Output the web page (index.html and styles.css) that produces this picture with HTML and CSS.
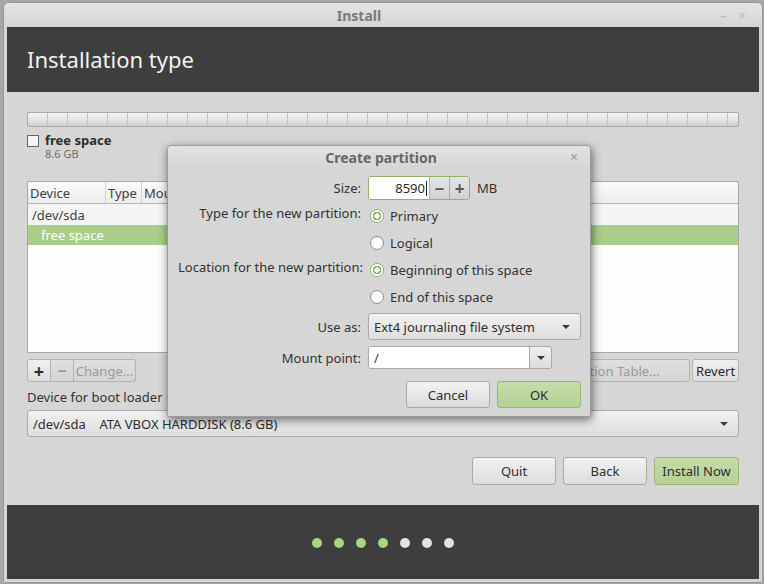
FILE: index.html
```html
<!DOCTYPE html>
<html>
<head>
<meta charset="utf-8">
<link rel="stylesheet" href="styles.css">
</head>
<body>
<div class="window">
  <div class="titlebar">
    <span class="wtitle">Install</span>
    <span class="wbtns"><span class="wmin">–</span><span class="wclose">×</span></span>
  </div>
  <div class="header">Installation type</div>
  <div class="content">
    <div class="pbar"></div>
    <div class="legend">
      <span class="check"></span>
      <div class="legend-text">
        <div class="lname">free space</div>
        <div class="lsize">8.6 GB</div>
      </div>
    </div>
    <div class="table">
      <div class="thead">
        <span class="c-dev">Device</span><span class="c-type">Type</span><span class="c-mount">Mount point</span><span class="c-rest"></span>
      </div>
      <div class="trow">
        <span class="c-dev">/dev/sda</span>
      </div>
      <div class="trow sel">
        <span class="c-dev indent">free space</span>
      </div>
    </div>
    <div class="tools">
      <div class="tgroup">
        <span class="tbtn plus">+</span><span class="tbtn minus dis">−</span><span class="tbtn change dis">Change...</span>
      </div>
      <div class="tright">
        <span class="tbtn ptable dis">New Partition Table...</span><span class="tbtn revert">Revert</span>
      </div>
    </div>
    <div class="bootlabel">Device for boot loader installation:</div>
    <div class="combo bootcombo"><span>/dev/sda&nbsp;&nbsp;&nbsp;&nbsp;ATA VBOX HARDDISK (8.6 GB)</span><span class="arrow"></span></div>
    <div class="actions">
      <span class="btn">Quit</span><span class="btn">Back</span><span class="btn green wide">Install Now</span>
    </div>
  </div>
  <div class="footer">
    <span class="dot on"></span><span class="dot on"></span><span class="dot on"></span><span class="dot on"></span><span class="dot"></span><span class="dot"></span><span class="dot"></span>
  </div>

  <div class="dialog">
    <div class="dtitle">Create partition<span class="dclose">×</span></div>
    <div class="dbody">
      <div class="drow r-size">
        <span class="dlabel">Size:</span>
        <div class="spin"><span class="spin-entry">8590<span class="caret"></span></span><span class="spin-btn">−</span><span class="spin-btn">+</span></div>
        <span class="unit">MB</span>
      </div>
      <div class="drow r-radio">
        <span class="dlabel up">Type for the new partition:</span>
        <span class="radio on"></span><span class="rtext">Primary</span>
      </div>
      <div class="drow r-radio">
        <span class="dlabel"></span>
        <span class="radio"></span><span class="rtext">Logical</span>
      </div>
      <div class="drow r-radio">
        <span class="dlabel up">Location for the new partition:</span>
        <span class="radio on"></span><span class="rtext">Beginning of this space</span>
      </div>
      <div class="drow r-radio">
        <span class="dlabel"></span>
        <span class="radio"></span><span class="rtext">End of this space</span>
      </div>
      <div class="drow r-use">
        <span class="dlabel">Use as:</span>
        <div class="combo usecombo"><span>Ext4 journaling file system</span><span class="arrow"></span></div>
      </div>
      <div class="drow r-mount">
        <span class="dlabel">Mount point:</span>
        <div class="mentry"><span class="mtext">/</span><span class="mbtn"><span class="arrow"></span></span></div>
      </div>
      <div class="dactions">
        <span class="btn">Cancel</span><span class="btn green">OK</span>
      </div>
    </div>
  </div>
</div>
</body>
</html>
```
FILE: styles.css
```css
* { box-sizing: border-box; }
html, body { margin: 0; padding: 0; }
body {
  width: 764px;
  height: 584px;
  background: #a7a7a7;
  font-family: "Noto Sans", "DejaVu Sans", sans-serif;
  font-size: 13px;
  color: #3c3c3c;
  padding: 3px 2px 0 4px;
  overflow: hidden;
}
.window {
  position: relative;
  width: 758px;
  height: 579px;
  background: #d6d6d6;
  border-radius: 5px 5px 0 0;
  padding: 0 3px 0 3px;
  display: flex;
  flex-direction: column;
  box-shadow: 0 0 2px rgba(0,0,0,0.3);
}
.titlebar {
  height: 24px;
  flex: none;
  position: relative;
  display: flex;
  align-items: center;
  justify-content: center;
  background: linear-gradient(#e4e4e4, #d6d6d6);
  border-radius: 5px 5px 0 0;
  margin: 0 -3px;
}
.wtitle { color: #7a7a7a; font-weight: bold; font-size: 14px; margin-left: -48px; }
.wbtns { position: absolute; right: 16px; top: 3px; color: #bdbdbd; font-size: 14px; display: flex; gap: 11px; }
.header {
  height: 65px;
  flex: none;
  background: #3e3e3e;
  color: #f2f2f2;
  font-size: 22px;
  padding: 0 0 2px 20px;
  display: flex;
  align-items: center;
}
.content {
  flex: none;
  height: 413px;
  padding: 20px 20px 0 20px;
}
.pbar {
  height: 15px;
  border: 1px solid #a9a9a9;
  border-radius: 2px;
  background:
    repeating-linear-gradient(to right, transparent 0 19px, #c4c4c4 19px 20px),
    linear-gradient(#f4f4f4, #e6e6e6 50%, #cdcdcd);
}
.legend { display: flex; margin-top: 8px; gap: 6px; }
.check {
  width: 12px; height: 12px;
  border: 1px solid #666;
  background: #f4f4f4;
}
.legend-text { margin-top: -2px; }
.lname { font-weight: bold; color: #2e2e2e; font-size: 13px; line-height: 14px; }
.lsize { font-size: 11px; color: #6d6d6d; line-height: 12px; margin-top: 1px; }
.table {
  margin-top: 21px;
  height: 172px;
  border: 1px solid #a8a8a8;
  background: #fdfdfd;
}
.thead {
  height: 22px;
  display: flex;
  align-items: center;
  background: linear-gradient(#fbfbfb, #ececec);
  border-bottom: 1px solid #b5b5b5;
  color: #3c3c3c;
}
.thead span { height: 100%; display: flex; align-items: center; padding-left: 2px; border-right: 1px solid #d2d2d2; }
.thead .c-rest { border-right: none; flex: 1; }
.c-dev { width: 78px; }
.c-type { width: 36px; }
.c-mount { width: 100px; }
.trow { height: 21px; display: flex; align-items: center; background: #f4f4f4; padding-left: 4px; }
.trow.sel { background: #aacd89; color: #fff; height: 20px; }
.indent { padding-left: 9px; }
.tools { margin-top: 6px; display: flex; justify-content: space-between; height: 23px; }
.tgroup, .tright { display: flex; }
.tbtn {
  height: 23px;
  display: flex; align-items: center; justify-content: center;
  border: 1px solid #b3b3b3;
  background: linear-gradient(#f0f0f0, #dcdcdc);
  color: #2a2a2a;
}
.tbtn.dis { color: #9a9a9a; background: linear-gradient(#e0e0e0, #d4d4d4); }
.plus { width: 24px; border-radius: 3px 0 0 3px; font-size: 18px; font-weight: bold; }
.minus { width: 23px; border-left: none; font-size: 16px; font-weight: bold; }
.change { width: 62px; border-left: none; border-radius: 0 3px 3px 0; }
.ptable { width: 190px; border-radius: 3px; margin-right: 2px; }
.revert { width: 47px; border-radius: 3px; }
.bootlabel { margin-top: 6px; height: 18px; line-height: 18px; color: #333; }
.combo {
  display: flex; align-items: center; justify-content: space-between;
  border: 1px solid #aaa;
  border-radius: 3px;
  background: linear-gradient(#f1f1f1, #dedede);
  color: #2e2e2e;
}
.bootcombo { margin-top: 4px; height: 27px; padding: 0 10px 0 5px; }
.arrow {
  width: 0; height: 0;
  border-left: 4px solid transparent;
  border-right: 4px solid transparent;
  border-top: 4px solid #3a3a3a;
}
.actions { margin-top: 20px; display: flex; justify-content: flex-end; gap: 7px; }
.btn {
  width: 84px; height: 28px;
  display: flex; align-items: center; justify-content: center;
  border: 1px solid #aaa;
  border-radius: 3px;
  background: linear-gradient(#f2f2f2, #dcdcdc);
  color: #2f2f2f;
}
.btn.wide { width: 85px; }
.btn.green { background: linear-gradient(#c5dcaa, #b4d196); border-color: #95b877; }
.footer {
  flex: none;
  height: 74px;
  background: #3e3e3e;
  display: flex;
  align-items: center;
  justify-content: center;
  gap: 12px;
  padding-top: 1px;
}
.dot { width: 10px; height: 10px; border-radius: 50%; background: #e2e2e2; }
.dot.on { background: #a9d47f; }

/* dialog */
.dialog {
  position: absolute;
  left: 163px;
  top: 142px;
  width: 424px;
  height: 272px;
  background: #d6d6d6;
  border: 1px solid #9c9c9c;
  border-radius: 4px 4px 0 0;
  box-shadow: 1px 3px 10px rgba(0,0,0,0.55);
}
.dtitle {
  height: 22px;
  position: relative;
  display: flex; align-items: center; justify-content: center;
  font-weight: bold;
  color: #676767;
  font-size: 14px;
  background: linear-gradient(#e2e2e2, #d6d6d6);
  border-radius: 4px 4px 0 0;
  padding-left: 4px;
}
.dclose { position: absolute; right: 12px; top: 1px; color: #a8a8a8; font-size: 14px; }
.dbody { padding: 8px 9px 0 10px; }
.drow { display: flex; align-items: center; }
.dlabel { width: 190px; text-align: right; padding-right: 7px; flex: none; color: #333; white-space: nowrap; }
.dlabel.up { position: relative; top: -3px; }
.r-size { height: 24px; margin-bottom: 2px; }
.spin {
  display: flex; height: 24px; width: 102px;
  border: 1px solid #8db36d; border-radius: 3px; overflow: hidden;
}
.spin-entry {
  width: 60px; background: #fff; text-align: right; padding-right: 2px;
  display: flex; align-items: center; justify-content: flex-end; color: #2a2a2a;
}
.caret { width: 1px; height: 15px; background: #222; margin-left: 1px; }
.spin-btn {
  width: 20px; display: flex; align-items: center; justify-content: center;
  background: linear-gradient(#e4e4e4, #d2d2d2); border-left: 1px solid #aaa;
  font-size: 17px; font-weight: bold; color: #555;
}
.unit { margin-left: 7px; color: #333; }
.r-radio { height: 27px; }
.radio {
  width: 14px; height: 14px; border-radius: 50%;
  border: 1px solid #8f8f8f;
  background: radial-gradient(#ffffff, #f4f4f4);
  margin-left: 2px; margin-right: 6px;
}
.radio.on {
  border-color: #8cb56c;
  background: radial-gradient(circle, #f3f8ee 0 2.5px, #7faa5d 3px 4px, #ffffff 4.5px);
}
.rtext { color: #333; }
.r-use { height: 27px; margin-top: 3px; }
.usecombo { width: 214px; height: 27px; padding: 0 10px 0 5px; }
.r-mount { height: 23px; margin-top: 6px; }
.mentry {
  display: flex; width: 184px; height: 23px;
  border: 1px solid #aaa; border-radius: 3px; overflow: hidden;
}
.mtext { flex: 1; background: #fff; padding-left: 5px; display: flex; align-items: center; }
.mbtn {
  width: 22px; border-left: 1px solid #aaa;
  background: linear-gradient(#efefef, #dcdcdc);
  display: flex; align-items: center; justify-content: center;
}
.dactions { display: flex; justify-content: flex-end; gap: 7px; margin-top: 12px; }
.dactions .btn { width: 84px; height: 27px; }
```
